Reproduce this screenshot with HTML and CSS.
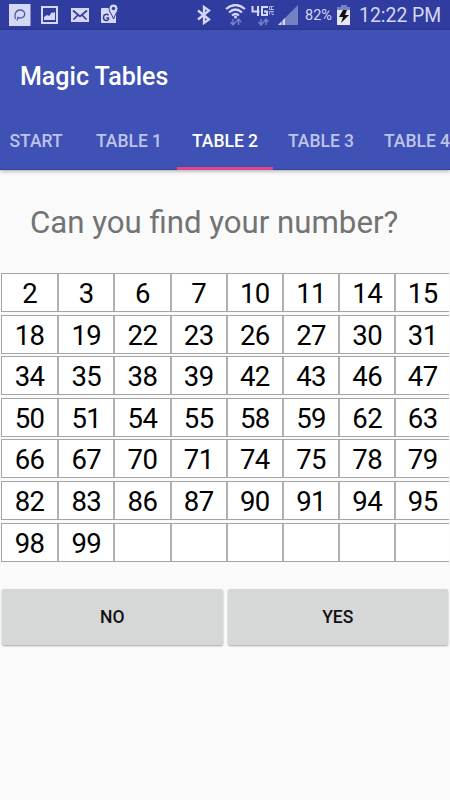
FILE: index.html
```
<!DOCTYPE html>
<html lang="en">

<head>
    <meta charset="UTF-8">
    <meta name="viewport" content="width=device-width, initial-scale=1.0">
    <title>Magic Tables</title>
    <link rel="stylesheet" href="styles.css">
</head>

<body>
    <div class="status">
        <div class="notices">
            <svg width="22" height="22" viewBox="0 0 22 22">
                <rect width="21.5" height="22" fill="#d5d8f4"/>
                <path d="M6.500 15c-1.500-4 0-9 4.500-9 6.500 0 6 8 0 8-1.500 0-2-.5-2-.5L8 16.500" fill="none" stroke="#4d59a8" stroke-width="1.300"/>
            </svg>
            <svg width="18" height="18" viewBox="0 0 18 18">
                <rect x="1" y="1" width="15" height="16" fill="none" stroke="#d5d8f4" stroke-width="2"/>
                <path d="M3 14v-3l3-2 2 1 3-4 1 1 2-1v8z" fill="#d5d8f4"/>
            </svg>
            <svg width="18" height="14" viewBox="0 0 18 14">
                <rect width="18" height="14" fill="#d5d8f4"/>
                <path d="M2 2.500 9 8.500 16 2.500M2.500 11.500 6.500 7.500M15.500 11.500 11.500 7.500" fill="none" stroke="#303c96" stroke-width="1.700"/>
            </svg>
            <svg width="20" height="20" viewBox="0 0 20 20">
                <path d="M2 4h14v15H2Q1 19 1 18V5Q1 4 2 4z" fill="#d5d8f4"/>
                <path d="M8.500 11.300C7 9.500 3.500 10 3.500 13.500s4.500 4 5 1.500V14H6.300" fill="none" stroke="#303c96" stroke-width="1.500"/>
                <path d="M13.500 15C12 10 9 8 9 4.500a4.500 4.500 0 0 1 9 0C18 8 15 10 13.500 15z" fill="#d5d8f4" stroke="#303c96" stroke-width="1"/>
                <circle cx="13.500" cy="4.500" r="1.700" fill="#303c96"/>
            </svg>
        </div>
        <div class="system">
            <svg class="bluetooth" width="14" height="20" viewBox="0 0 14 20">
                <path d="M1 5.500 12 14.500 7 18V2l5 3.500L1 14.500" fill="none" stroke="#d5d8f4" stroke-width="2.300"/>
            </svg>
            <svg class="wifi" width="22" height="22" viewBox="0 0 22 22">
                <path d="M1 5Q10.500-3 20 5M4 8.500Q10.500 2.500 17 8.500M7 11.500Q10.500 8.500 14 11.500" fill="none" stroke="#d5d8f4" stroke-width="2.200"/>
                <circle cx="10.500" cy="13" r="1.500" fill="#d5d8f4"/>
                <path d="M8 15v6M5.500 18l2.500 3 2.500-3M13.500 21v-6M11 18l2.500-3 2.500 3" fill="none" stroke="#7982c5" stroke-width="1.400"/>
            </svg>
            <svg class="network" width="24" height="22" viewBox="0 0 24 22">
                <path d="M1.500 2v5.500h7M7 2v10M17 3h-6v8h5V7.500h-3" fill="none" stroke="#d5d8f4" stroke-width="2"/>
                <path d="M18.500 5V2.500h4M20.500 2.500v3M18 5.500h5M18.500 7.500h4.500M18.500 7.500v3M21 7.500v3h2" fill="none" stroke="#a9afe0" stroke-width="1"/>
                <path d="M10 15v6M7.500 18l2.500 3 2.500-3M15 21v-6M12.500 18l2.500-3 2.500 3" fill="none" stroke="#7982c5" stroke-width="1.400"/>
            </svg>
            <svg class="signal" width="20" height="20" viewBox="0 0 20 20">
                <path d="M0 20 20 0v20z" fill="#7680c4"/>
                <path d="M0 20l7-7v7z" fill="#d5d8f4"/>
                <path d="M4 14v6" stroke="#303c96" stroke-width=".8"/>
            </svg>
            <span class="percent">82%</span>
            <svg class="battery" width="13" height="20" viewBox="0 0 13 20">
                <path d="M4 0h6v2h3v3H0V2h4z" fill="#7680c4"/>
                <path d="M0 5h13v15H0z" fill="#e6e7f4"/>
                <path d="M6 5h4L8 10h4L4 18l2-6H2z" fill="#111"/>
            </svg>
            <span class="time">12:22 PM</span>
        </div>
    </div>

    <header>
        <h1>Magic Tables</h1>
        <nav>
            <a class="start">START</a>
            <a>TABLE 1</a>
            <a class="active">TABLE 2</a>
            <a>TABLE 3</a>
            <a>TABLE 4</a>
        </nav>
    </header>

    <main>
        <h2>Can you find your number?</h2>
        <div class="numbers">
            <div class="row"><span>2</span><span>3</span><span>6</span><span>7</span><span>10</span><span>11</span><span>14</span><span>15</span></div>
            <div class="row"><span>18</span><span>19</span><span>22</span><span>23</span><span>26</span><span>27</span><span>30</span><span>31</span></div>
            <div class="row"><span>34</span><span>35</span><span>38</span><span>39</span><span>42</span><span>43</span><span>46</span><span>47</span></div>
            <div class="row"><span>50</span><span>51</span><span>54</span><span>55</span><span>58</span><span>59</span><span>62</span><span>63</span></div>
            <div class="row"><span>66</span><span>67</span><span>70</span><span>71</span><span>74</span><span>75</span><span>78</span><span>79</span></div>
            <div class="row"><span>82</span><span>83</span><span>86</span><span>87</span><span>90</span><span>91</span><span>94</span><span>95</span></div>
            <div class="row"><span>98</span><span>99</span><span></span><span></span><span></span><span></span><span></span><span></span></div>
        </div>
        <div class="buttons">
            <button>NO</button>
            <button>YES</button>
        </div>
    </main>
</body>

</html>
```
FILE: styles.css
```
* {
    box-sizing: border-box;
}

body {
    margin: 0;
    height: 800px;
    overflow: hidden;
    background: #fafafa;
    font-family: Roboto, sans-serif;
}

.status {
    height: 30px;
    padding: 0 10px 0 9px;
    background: #303c9f;
    color: #d5d8f4;
    display: flex;
    justify-content: space-between;
    align-items: center;
}

.notices,
.system {
    display: flex;
    align-items: center;
}

.notices {
    gap: 11px;
}

.notices svg:nth-child(2) {
    margin-left: -1px;
}

.notices svg:nth-child(3) {
    margin-left: 1px;
}

.notices svg:last-child {
    margin-top: -3px;
}

.bluetooth {
    margin-right: 14px;
}

.wifi {
    margin-right: 4px;
}

.network {
    margin-right: 3px;
}

.signal {
    margin-right: 7px;
}

.percent {
    width: 32px;
    font-size: 14.5px;
}

.battery {
    margin-right: 9px;
}

.time {
    width: 81px;
    font-size: 19.4px;
    white-space: nowrap;
}

header {
    height: 140px;
    background: #3f51b5;
    color: #fff;
    box-shadow: inset 0 -1px #33429f, 0 1px 4px rgba(0, 0, 0, 0.35);
}

h1 {
    margin: 0;
    height: 93px;
    padding-left: 20px;
    font-size: 25px;
    font-weight: 500;
    line-height: 93px;
}

nav {
    height: 47px;
    display: flex;
    overflow: hidden;
}

nav a {
    flex: 0 0 96px;
    height: 47px;
    padding-top: 2px;
    color: #bdc4ea;
    font-size: 17.5px;
    font-weight: 500;
    line-height: 32px;
    text-align: center;
}

nav .start {
    flex-basis: 81px;
    padding-right: 9px;
}

nav .active {
    color: #fff;
    border-bottom: 3px solid #e0458a;
}

h2 {
    margin: 0;
    height: 103px;
    padding-left: 30px;
    color: #737373;
    font-size: 31.2px;
    font-weight: 400;
    line-height: 105px;
}

.numbers {
    padding: 0 1px;
    display: flex;
    flex-direction: column;
    gap: 2.6px;
}

.row {
    height: 39px;
    display: flex;
    background: #fff;
    border: 1px solid #a5a5a5;
    border-right: none;
}

.row span {
    flex: 0 0 56.2px;
    font-size: 27.5px;
    letter-spacing: -0.6px;
    line-height: 39px;
    text-align: center;
    color: #000;
}

.row span:first-child {
    flex-basis: 55.2px;
}

.row span + span {
    border-left: 2px solid #b0b0b0;
}

.row span:last-child {
    flex: 1;
}

.buttons {
    padding: 27.4px 2px 0;
    display: flex;
    gap: 5px;
}

button {
    flex: 1;
    height: 56px;
    border: none;
    border-radius: 2px;
    background: #d6d7d7;
    box-shadow: 0 1px 2px rgba(0, 0, 0, 0.35);
    color: #111;
    font-family: inherit;
    font-size: 17.5px;
    font-weight: 500;
}
```
